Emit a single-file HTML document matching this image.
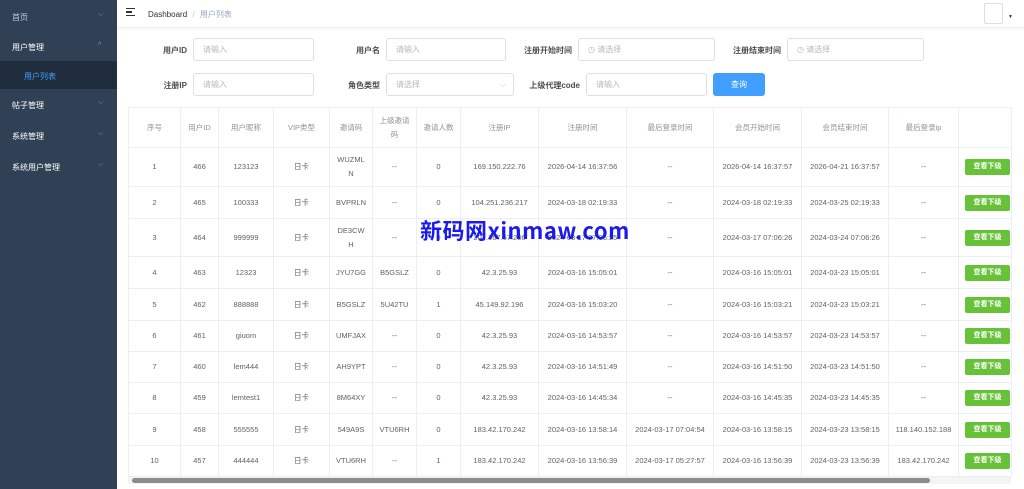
<!DOCTYPE html>
<html><head><meta charset="utf-8"><style>
*{margin:0;padding:0;box-sizing:border-box}
body{width:1024px;height:489px;overflow:hidden;background:#fff;font-family:"Liberation Sans","Noto Sans CJK SC",sans-serif;font-size:8px;color:#606266;position:relative}
.side{position:absolute;left:0;top:0;width:117px;height:489px;background:#304156}
.mi{position:absolute;left:12px;color:#bfcbd9;font-size:8px}
.mi.w{color:#fff}
.car{position:absolute;left:98px;color:#8a97a6;font-size:7px}
.sub{position:absolute;left:0;top:61px;width:117px;height:28px;background:#1f2d3d}
.hdr{position:absolute;left:117px;top:0;right:0;height:28px;border-bottom:1px solid #eef0f3;box-shadow:0 1px 3px rgba(0,0,0,.05)}
.lbl{position:absolute;font-weight:bold;color:#4a4d52;font-size:8px;text-align:right}
.inp{position:absolute;height:23px;border:1px solid #dcdfe6;border-radius:3px;color:#b5b8bf;font-size:8px;padding-left:9px;line-height:21px}
.btn{position:absolute;left:713px;top:73px;width:52px;height:23px;background:#409eff;border-radius:3px;color:#fff;font-size:8px;text-align:center;line-height:23px}
table{position:absolute;left:128px;top:107px;border-collapse:collapse;table-layout:fixed;width:883px}
td{border:1px solid #ebeef5;text-align:center;font-size:7.5px;color:#606266;line-height:14px;padding:0 6px;word-break:break-all}
thead td{color:#909399;height:40px}
.g{display:inline-block;width:45px;height:16px;background:#67c23a;border-radius:2px;color:#fff;font-size:7px;line-height:16px;font-weight:bold}
.wm{position:absolute;left:420px;top:214px;font-size:22px;color:#1a1aee;font-family:"Noto Sans CJK SC","Liberation Sans",sans-serif;font-weight:bold;letter-spacing:0.5px}
</style></head><body>
<div class="side">
<div class="mi" style="top:12px">首页</div><div class="car" style="top:11px">⌵</div>
<div class="mi w" style="top:42px">用户管理</div><div class="car" style="top:42px">^</div>
<div class="sub"></div><div class="mi" style="top:71px;left:24px;color:#409eff">用户列表</div>
<div class="mi w" style="top:100px">帖子管理</div><div class="car" style="top:99px">⌵</div>
<div class="mi w" style="top:131px">系统管理</div><div class="car" style="top:130px">⌵</div>
<div class="mi w" style="top:162px">系统用户管理</div><div class="car" style="top:161px">⌵</div>
</div>
<div class="hdr">
<div style="position:absolute;left:9px;top:8px;width:9px;height:8px;border-top:1.5px solid #333;border-bottom:1.5px solid #333"><div style="position:absolute;left:0;top:2px;width:6px;height:1.5px;background:#333"></div></div>
<div style="position:absolute;left:31px;top:9px;font-size:8px;color:#303133">Dashboard <span style="color:#c0c4cc;margin:0 3px">/</span> <span style="color:#97a8be">用户列表</span></div>
<div style="position:absolute;left:867px;top:3px;width:19px;height:21px;border:1px solid #ddd;border-radius:2px"></div>
<div style="position:absolute;left:891px;top:14px;font-size:5px;color:#333">▼</div>
</div>
<div class="lbl" style="left:140px;top:45px;width:47px">用户ID</div><div class="inp" style="left:193px;top:38px;width:121px">请输入</div>
<div class="lbl" style="left:330px;top:45px;width:50px">用户名</div><div class="inp" style="left:386px;top:38px;width:120px">请输入</div>
<div class="lbl" style="left:510px;top:45px;width:62px">注册开始时间</div><div class="inp" style="left:578px;top:38px;width:137px">◷ 请选择</div>
<div class="lbl" style="left:720px;top:45px;width:61px">注册结束时间</div><div class="inp" style="left:787px;top:38px;width:137px">◷ 请选择</div>
<div class="lbl" style="left:140px;top:80px;width:47px">注册IP</div><div class="inp" style="left:193px;top:73px;width:121px">请输入</div>
<div class="lbl" style="left:320px;top:80px;width:60px">角色类型</div><div class="inp" style="left:386px;top:73px;width:128px">请选择<span style="position:absolute;right:7px;color:#c0c4cc">⌵</span></div>
<div class="lbl" style="left:510px;top:80px;width:70px">上级代理code</div><div class="inp" style="left:586px;top:73px;width:121px">请输入</div>
<div class="btn">查询</div>
<table>
<colgroup><col style="width:52px"><col style="width:38px"><col style="width:55px"><col style="width:56px"><col style="width:43px"><col style="width:44px"><col style="width:44px"><col style="width:78px"><col style="width:88px"><col style="width:87px"><col style="width:88px"><col style="width:87px"><col style="width:70px"><col style="width:53px"></colgroup>
<thead><tr><td>序号</td><td>用户ID</td><td>用户昵称</td><td>VIP类型</td><td>邀请码</td><td>上级邀请码</td><td>邀请人数</td><td>注册IP</td><td>注册时间</td><td>最后登录时间</td><td>会员开始时间</td><td>会员结束时间</td><td>最后登录ip</td><td></td></tr></thead>
<tbody>
<tr style="height:39px"><td>1</td><td>466</td><td>123123</td><td>日卡</td><td>WUZMLN</td><td>--</td><td>0</td><td>169.150.222.76</td><td>2026-04-14 16:37:56</td><td>--</td><td>2026-04-14 16:37:57</td><td>2026-04-21 16:37:57</td><td>--</td><td><span class="g">查看下级</span></td></tr>
<tr style="height:32px"><td>2</td><td>465</td><td>100333</td><td>日卡</td><td>BVPRLN</td><td>--</td><td>0</td><td>104.251.236.217</td><td>2024-03-18 02:19:33</td><td>--</td><td>2024-03-18 02:19:33</td><td>2024-03-25 02:19:33</td><td>--</td><td><span class="g">查看下级</span></td></tr>
<tr style="height:38px"><td>3</td><td>464</td><td>999999</td><td>日卡</td><td>DE3CWH</td><td>--</td><td>0</td><td>207.167.67.206</td><td>2024-03-17 07:06:25</td><td>--</td><td>2024-03-17 07:06:26</td><td>2024-03-24 07:06:26</td><td>--</td><td><span class="g">查看下级</span></td></tr>
<tr style="height:32px"><td>4</td><td>463</td><td>12323</td><td>日卡</td><td>JYU7GG</td><td>B5GSLZ</td><td>0</td><td>42.3.25.93</td><td>2024-03-16 15:05:01</td><td>--</td><td>2024-03-16 15:05:01</td><td>2024-03-23 15:05:01</td><td>--</td><td><span class="g">查看下级</span></td></tr>
<tr style="height:32px"><td>5</td><td>462</td><td>888888</td><td>日卡</td><td>B5GSLZ</td><td>5U42TU</td><td>1</td><td>45.149.92.196</td><td>2024-03-16 15:03:20</td><td>--</td><td>2024-03-16 15:03:21</td><td>2024-03-23 15:03:21</td><td>--</td><td><span class="g">查看下级</span></td></tr>
<tr style="height:31px"><td>6</td><td>461</td><td>giuom</td><td>日卡</td><td>UMFJAX</td><td>--</td><td>0</td><td>42.3.25.93</td><td>2024-03-16 14:53:57</td><td>--</td><td>2024-03-16 14:53:57</td><td>2024-03-23 14:53:57</td><td>--</td><td><span class="g">查看下级</span></td></tr>
<tr style="height:31px"><td>7</td><td>460</td><td>lem444</td><td>日卡</td><td>AH9YPT</td><td>--</td><td>0</td><td>42.3.25.93</td><td>2024-03-16 14:51:49</td><td>--</td><td>2024-03-16 14:51:50</td><td>2024-03-23 14:51:50</td><td>--</td><td><span class="g">查看下级</span></td></tr>
<tr style="height:31px"><td>8</td><td>459</td><td>lemtest1</td><td>日卡</td><td>8M64XY</td><td>--</td><td>0</td><td>42.3.25.93</td><td>2024-03-16 14:45:34</td><td>--</td><td>2024-03-16 14:45:35</td><td>2024-03-23 14:45:35</td><td>--</td><td><span class="g">查看下级</span></td></tr>
<tr style="height:32px"><td>9</td><td>458</td><td>555555</td><td>日卡</td><td>549A9S</td><td>VTU6RH</td><td>0</td><td>183.42.170.242</td><td>2024-03-16 13:58:14</td><td>2024-03-17 07:04:54</td><td>2024-03-16 13:58:15</td><td>2024-03-23 13:58:15</td><td style="padding:0 2px">118.140.152.188</td><td><span class="g">查看下级</span></td></tr>
<tr style="height:31px"><td>10</td><td>457</td><td>444444</td><td>日卡</td><td>VTU6RH</td><td>--</td><td>1</td><td>183.42.170.242</td><td>2024-03-16 13:56:39</td><td>2024-03-17 05:27:57</td><td>2024-03-16 13:56:39</td><td>2024-03-23 13:56:39</td><td style="padding:0 2px">183.42.170.242</td><td><span class="g">查看下级</span></td></tr>
</tbody></table>
<div style="position:absolute;left:128px;top:477px;width:883px;height:7px;background:#f4f4f4"></div>
<div style="position:absolute;left:132px;top:478px;width:798px;height:5px;background:#8c8c8c;border-radius:3px"></div>
<div class="wm">新码网xinmaw.com</div>
</body></html>
